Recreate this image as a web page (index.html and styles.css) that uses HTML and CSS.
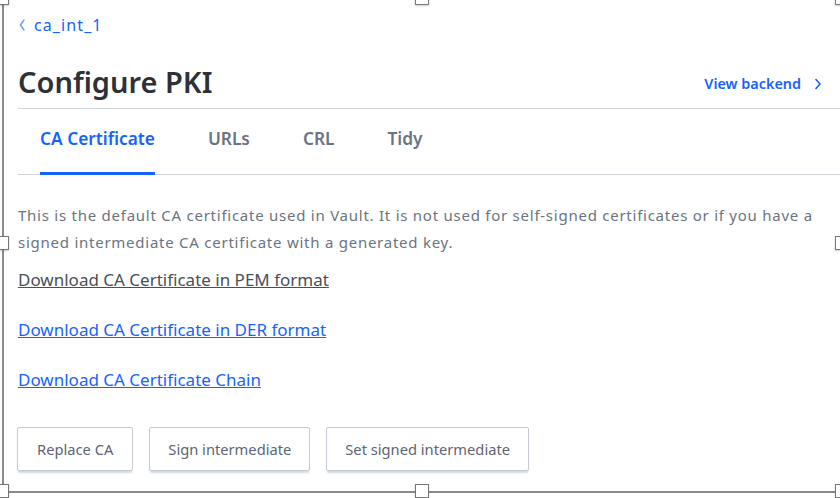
FILE: index.html
```html
<!DOCTYPE html>
<html lang="en">
<head>
<meta charset="utf-8">
<title>Configure PKI</title>
<link rel="stylesheet" href="styles.css">
</head>
<body>
<div class="page">
  <header class="page-header">
    <div class="title-block">
      <nav class="breadcrumb">
        <svg class="crumb-chevron" width="6" height="12" viewBox="0 0 6 12"><path d="M5 1 L1.5 6 L5 11" fill="none" stroke="#6e9bff" stroke-width="1.4" stroke-linecap="round" stroke-linejoin="round"/></svg>
        <a href="#" class="crumb-link">ca_int_1</a>
      </nav>
      <h1 class="title">Configure PKI</h1>
    </div>
    <a href="#" class="view-backend">View backend
      <svg class="vb-chevron" width="8" height="12" viewBox="0 0 8 12"><path d="M2 1.5 L6 6 L2 10.5" fill="none" stroke="#1563ff" stroke-width="1.6" stroke-linecap="round" stroke-linejoin="round"/></svg>
    </a>
  </header>

  <nav class="tabs">
    <a href="#" class="tab active">CA Certificate</a>
    <a href="#" class="tab">URLs</a>
    <a href="#" class="tab">CRL</a>
    <a href="#" class="tab">Tidy</a>
  </nav>

  <section class="content">
    <p class="desc">This is the default CA certificate used in Vault. It is not used for self-signed certificates or if you have a signed intermediate CA certificate with a generated key.</p>
    <div class="links">
      <a href="#" class="dl dl-visited">Download CA Certificate in PEM format</a>
      <a href="#" class="dl">Download CA Certificate in DER format</a>
      <a href="#" class="dl">Download CA Certificate Chain</a>
    </div>
    <div class="buttons">
      <button class="btn">Replace CA</button>
      <button class="btn">Sign intermediate</button>
      <button class="btn">Set signed intermediate</button>
    </div>
  </section>
</div>

<div class="frame">
  <span class="handle h-tl"></span>
  <span class="handle h-tm"></span>
  <span class="handle h-tr"></span>
  <span class="handle h-ml"></span>
  <span class="handle h-mr"></span>
  <span class="handle h-bl"></span>
  <span class="handle h-bm"></span>
  <span class="handle h-br"></span>
</div>
</body>
</html>
```

FILE: styles.css
```css
* { box-sizing: border-box; }
html, body {
  margin: 0;
  padding: 0;
  background: #fff;
  width: 840px;
  height: 498px;
  overflow: hidden;
  font-family: "Noto Sans", "Open Sans", sans-serif;
}
.page {
  padding-left: 18px;
}
.page-header {
  display: flex;
  align-items: flex-end;
  justify-content: space-between;
  padding-right: 18px;
  padding-bottom: 8px;
  border-bottom: 1px solid #cfd3da;
  height: 109px;
}
.title-block {
  display: flex;
  flex-direction: column;
}
.breadcrumb {
  display: flex;
  align-items: center;
  height: 20px;
  margin-bottom: 28px;
}
.crumb-chevron { margin-left: 1px; margin-right: 9px; }
.crumb-link {
  color: #1563ff;
  text-decoration: none;
  font-size: 16px;
  letter-spacing: 1.1px;
  line-height: 20px;
}
.title {
  margin: 0;
  font-size: 29px;
  line-height: 36px;
  font-weight: 600;
  color: #2e3136;
  margin-top: 1px;
}
.view-backend {
  display: flex;
  align-items: center;
  gap: 13px;
  color: #1563ff;
  font-size: 14.4px;
  font-weight: 600;
  text-decoration: none;
  line-height: 20px;
  margin-bottom: 6px;
}
.tabs {
  display: flex;
  gap: 53px;
  padding-left: 22px;
  border-bottom: 1px solid #cfd3da;
  height: 66px;
}
.tab {
  padding-top: 20px;
  height: 66px;
  font-size: 17.3px;
  line-height: 20px;
  font-weight: 600;
  color: #6a7482;
  text-decoration: none;
  border-bottom: 3px solid transparent;
}
.tab.active {
  color: #1563ff;
  border-bottom-color: #1563ff;
}
.content {
  padding-top: 27px;
}
.desc {
  margin: 0;
  padding-right: 18px;
  font-size: 15px;
  letter-spacing: 0.75px;
  line-height: 27px;
  color: #6a7482;
}
.links {
  display: flex;
  flex-direction: column;
  align-items: flex-start;
  gap: 26px;
  margin-top: 12px;
}
.dl {
  font-size: 17px;
  line-height: 24px;
  color: #1563ff;
  text-decoration: underline;
}
.dl-visited { color: #4a4f57; }
.buttons {
  display: flex;
  gap: 16px;
  margin-top: 35px;
  margin-left: -1px;
}
.btn {
  height: 44px;
  padding: 0 18px;
  background: #fff;
  border: 1px solid #c4cad4;
  border-radius: 2px;
  box-shadow: 0 3px 2px -1px rgba(160,170,185,0.45);
  font-family: inherit;
  font-size: 14.7px;
  color: #5d6573;
}
.btn:first-child { padding: 0 19px; }
.frame {
  position: absolute;
  left: 2px;
  top: -2px;
  width: 840px;
  height: 495px;
  border-left: 2px solid #8a8a8a;
  border-bottom: 2px solid #8a8a8a;
  pointer-events: none;
}
.handle {
  position: absolute;
  width: 14px;
  height: 14px;
  background: #fff;
  border: 1px solid #777;
  box-shadow: 0 1px 2px rgba(0,0,0,0.2);
}
.h-tl { left: -9px; top: -7px; }
.h-tm { left: 411px; top: -7px; }
.h-tr { left: 831px; top: -7px; }
.h-ml { left: -9px; top: 238px; }
.h-mr { left: 831px; top: 238px; }
.h-bl { left: -9px; top: 486px; }
.h-bm { left: 411px; top: 486px; }
.h-br { left: 831px; top: 486px; }
```
